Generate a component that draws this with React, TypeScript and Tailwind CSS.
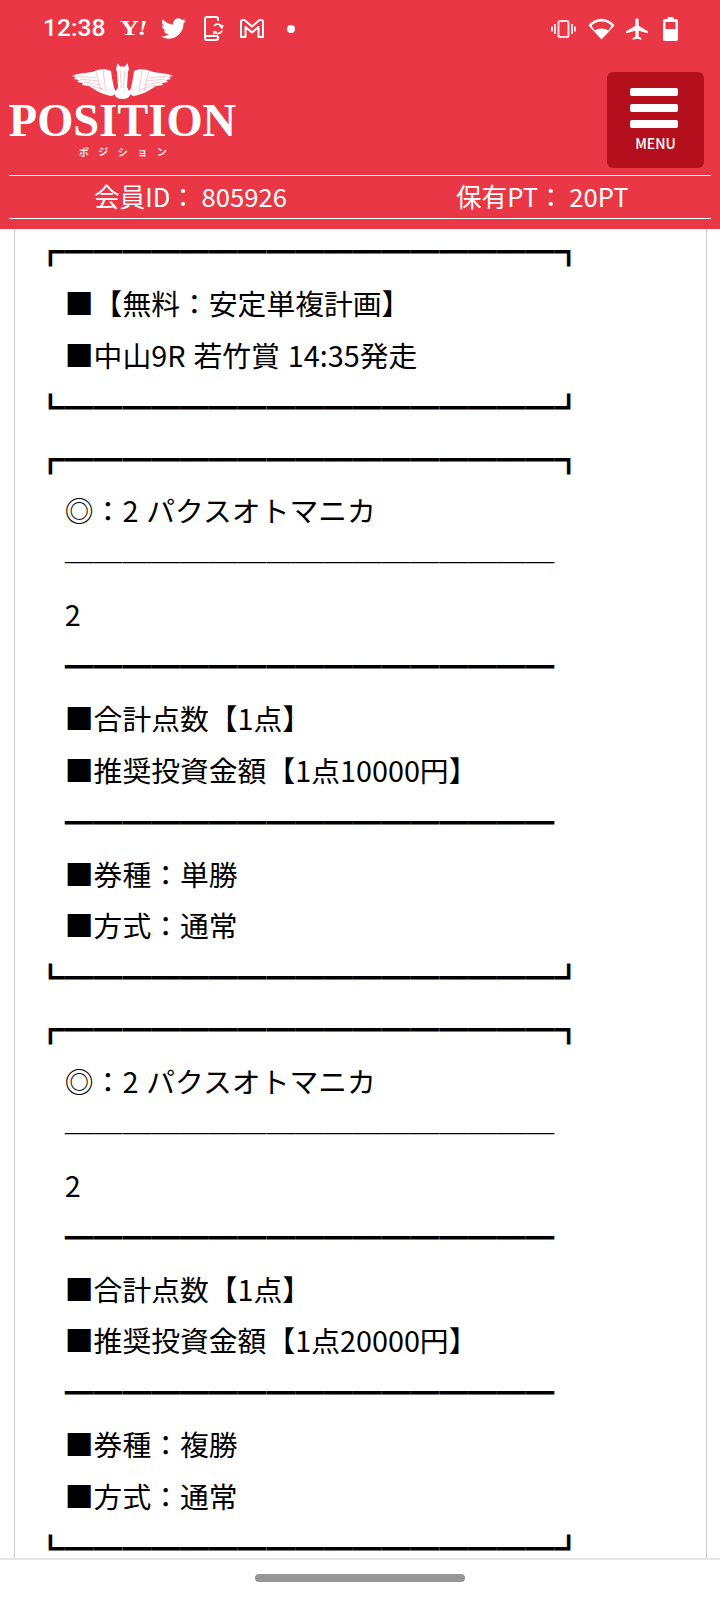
import React from 'react';
import { FaTwitter } from 'react-icons/fa';
import { MdAirplanemodeActive } from 'react-icons/md';

const TOP = '┏' + '━'.repeat(17) + '┓';
const BOTTOM = '┗' + '━'.repeat(17) + '┛';
const THIN = '　' + '─'.repeat(17);
const THICK = '　' + '━'.repeat(17);

const betBlock = (amount: string, kind: string) => [
  TOP,
  '　◎：2 パクスオトマニカ',
  THIN,
  '　2',
  THICK,
  '　■合計点数【1点】',
  `　■推奨投資金額【1点${amount}円】`,
  THICK,
  `　■券種：${kind}`,
  '　■方式：通常',
  BOTTOM,
];

const rows = [
  TOP,
  '　■【無料：安定単複計画】',
  '　■中山9R 若竹賞 14:35発走',
  BOTTOM,
  ...betBlock('10000', '単勝'),
  ...betBlock('20000', '複勝'),
];

const StatusBar = () => (
  <div className="flex h-[57px] items-center justify-between pl-[43px] pr-[42px] text-white">
    <div className="flex items-center">
      <span className="w-[77px] font-['Roboto'] text-[24.600px] font-medium leading-none">12:38</span>
      <span className="flex w-[41px] origin-left scale-x-125 items-baseline font-['Liberation_Serif'] font-bold leading-none">
        <span className="text-[21px]">Y</span>
        <span className="ml-[-1px] text-[20px] italic">!</span>
      </span>
      <FaTwitter className="text-[25px]" />
      <svg className="ml-[18px]" width="20" height="25" viewBox="0 0 20 25" fill="none" stroke="white" strokeWidth="2">
        <path d="M14 5V3a2 2 0 0 0-2-2H3a2 2 0 0 0-2 2v19a2 2 0 0 0 2 2h9a2 2 0 0 0 2-2v-2" />
        <path d="M1 20h13" />
        <path d="M10 10a4.500 4.500 0 0 1 8 1.500M18 14.500a4.500 4.500 0 0 1-8 1" strokeWidth="1.600" />
        <path d="M15.500 9.500l2.500 2.500 1-3M12.500 16l-2.500-.5-.5 3" strokeWidth="1.400" />
      </svg>
      <svg className="ml-[16px]" width="24" height="19" viewBox="0 0 24 19" fill="none" stroke="white" strokeWidth="2" strokeLinejoin="round">
        <path d="M1 18V3q0-2 2-2h1.500L12 7.500 19.500 1H21q2 0 2 2v15h-4.500V8L12 13.500 5.500 8v10z" />
      </svg>
      <span className="ml-[23px] h-[8px] w-[8px] rounded-full bg-white" />
    </div>
    <div className="flex items-center">
      <svg width="25" height="18" viewBox="0 0 25 18" fill="none" stroke="white" strokeOpacity="0.850">
        <rect x="7.500" y="1" width="10" height="16" rx="1.500" strokeWidth="2" />
        <path d="M4 4v10M21 4v10" strokeWidth="2" />
        <path d="M1 6.500v5M24 6.500v5" strokeWidth="2" />
      </svg>
      <svg className="ml-[12px]" width="27" height="22" viewBox="0 0 27 22">
        <path d="M13.500 21.500L.5 7.500Q6 .8 13.500.8T26.500 7.500z" fill="white" />
        <path d="M13.500 10.500q-4 0-7 2L3.500 7.500q4.500-4 10-4t10 4l-3 5q-3-2-7-2z" fill="#e93745" />
      </svg>
      <MdAirplanemodeActive className="ml-[9px] text-[26px]" />
      <svg className="ml-[13px]" width="15" height="24" viewBox="0 0 15 24">
        <path d="M4.500 0h6v2h2.500a2 2 0 0 1 2 2v18a2 2 0 0 1-2 2H2a2 2 0 0 1-2-2V4a2 2 0 0 1 2-2h2.500z" fill="white" />
        <rect x="2.500" y="5" width="10" height="7" fill="#e93745" />
      </svg>
    </div>
  </div>
);

const Logo = () => (
  <div className="flex w-[227px] flex-col items-center">
    <svg width="102" height="36" viewBox="0 0 102 36" fill="white">
      <path d="M39 8C33 5 26 6 20 9 14 10 6 10 0 13l4 1-2 2 5 1-2 2 6 1-1 2 7 1c6 4 14 9 23 10l5-3-3-5-2-10z" />
      <path d="M62 8c6-3 13-2 19 1 6 1 14 1 20 4l-4 1 2 2-5 1 2 2-6 1 1 2-7 1c-6 4-14 9-23 10l-5-3 3-5 2-10z" />
      <path d="M45.500 0L48 3.500h5L55.500 0 57 6l-1 3-1 15 2 4c3 5-1 8-6.500 8S41 33 44 28l2-4-1-15-1-3z" />
      <g fill="none" stroke="#e93745" strokeWidth="0.500" strokeOpacity="0.550">
        <path d="M5 13l19 2M8 16l18 2M12 19l16 3M17 22l14 4M24 8l5 20M31 7l3 22" />
        <path d="M96 13l-19 2M93 16l-18 2M89 19l-16 3M84 22l-14 4M77 8l-5 20M70 7l-3 22" />
        <path d="M48 7l1.500 18M53 7l-1.500 18" />
      </g>
    </svg>
    <div className="mt-[1px] font-['Liberation_Serif'] text-[46.500px] font-bold leading-[42px] text-white">POSITION</div>
    <div className="ml-[10px] mt-[4px] font-['Noto_Sans_CJK_JP',sans-serif] text-[10px] font-bold leading-[12px] tracking-[9.500px] text-white/90">ボジション</div>
  </div>
);

const MenuButton = () => (
  <div className="flex h-[96px] w-[97px] flex-col items-center rounded-[6px] bg-[#b30f1c] pt-[16px]">
    <span className="mr-[3px] h-[8px] w-[48px] rounded-[2px] bg-white" />
    <span className="mr-[3px] mt-[8px] h-[8px] w-[48px] rounded-[2px] bg-white" />
    <span className="mr-[3px] mt-[8px] h-[8px] w-[48px] rounded-[2px] bg-white" />
    <span className="mt-[5px] font-['Noto_Sans_CJK_JP',sans-serif] text-[14px] font-medium leading-[20px] text-white">MENU</span>
  </div>
);

const Header = () => (
  <header className="h-[229px] shrink-0 bg-[#e93745]">
    <StatusBar />
    <div className="flex h-[118px] items-start justify-between pl-[9px] pr-[16px] pt-[6px]">
      <Logo />
      <div className="mt-[9px]">
        <MenuButton />
      </div>
    </div>
    <div className="mx-[9px] flex h-[44px] items-center border-y border-white pb-[3px] font-['Noto_Sans_CJK_JP',sans-serif] text-[25.600px] leading-none text-white">
      <div className="w-[447px] pl-[85px]">会員ID： 805926</div>
      <div>保有PT： 20PT</div>
    </div>
  </header>
);

export default function App() {
  return (
    <div className="flex h-[1600px] w-[720px] flex-col overflow-hidden bg-white">
      <Header />
      <main className="ml-[14px] mr-[13px] min-h-0 flex-1 overflow-hidden border-x border-[#cccccc] pl-[21px] font-['Noto_Sans_CJK_JP',sans-serif] text-[28.800px] leading-[51.880px] text-black [word-spacing:1.500px]">
        <div className="mt-[-4px]">
          {rows.map((row, i) => (
            <div key={i} className="h-[51.880px] whitespace-pre">{row}</div>
          ))}
        </div>
      </main>
      <footer className="flex h-[42px] shrink-0 justify-center border-t-2 border-[#e6e6e6] bg-white pt-[14px]">
        <span className="h-[8px] w-[210px] rounded-full bg-[#979797]" />
      </footer>
    </div>
  );
}
